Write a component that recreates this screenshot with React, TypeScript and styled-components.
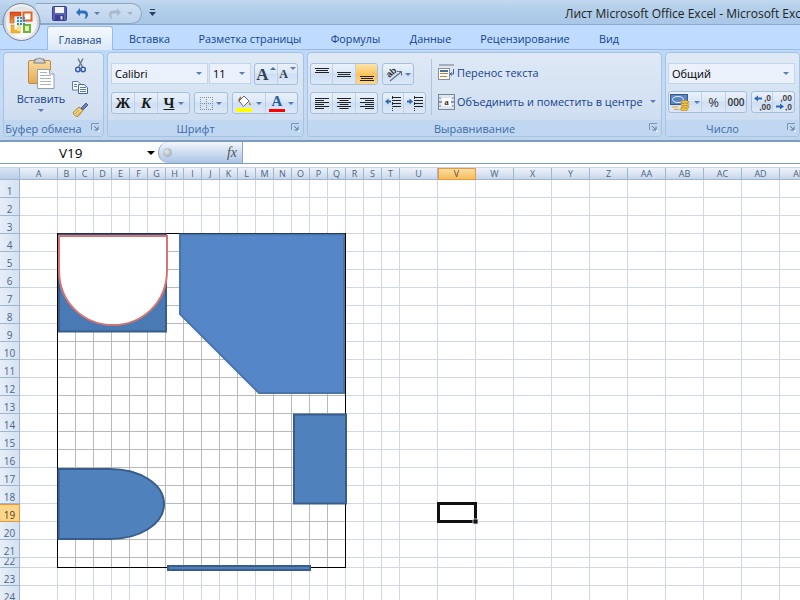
import React from 'react';
import styled, { createGlobalStyle, css } from 'styled-components';

const Global = createGlobalStyle`
  html, body { margin: 0; padding: 0; width: 800px; height: 600px; overflow: hidden; background: #fff; }
  #root { width: 800px; height: 600px; }
`;

const uiFont = `"Open Sans", "Noto Sans", "DejaVu Sans", sans-serif`;

const Window = styled.div`
  width: 800px; height: 600px; overflow: hidden; position: relative;
  display: flex; flex-direction: column; font-family: ${uiFont}; font-size: 11px; color: #15428b;
`;
const TitleBar = styled.div`
  height: 24px; flex: none; display: flex; align-items: center; padding-left: 36px;
  background: linear-gradient(#c2d8f0, #b0cde9 45%, #a9c7e6);
  border-bottom: 1px solid #8ca9c8; box-sizing: content-box; overflow: hidden;
`;
const Qat = styled.div`
  width: 106px; height: 21px; box-sizing: border-box; margin-top: 2px; flex: none;
  display: flex; align-items: center; padding-left: 16px;
  border: 1px solid #8fa7c4; border-left: none; border-radius: 0 12px 12px 0;
  background: linear-gradient(#cfe0f3, #bcd3ec);
`;
const QatGap = styled.span<{ $w: number }>`width: ${p => p.$w}px; flex: none;`;
const Customize = styled.div`margin-left: 7px; display: flex; flex: none;`;
const TitleText = styled.div`
  margin-left: 409px; white-space: pre; color: #222; font-size: 12px; flex: none; margin-top: 3px;
`;
const OfficeOrb = styled.div`position: absolute; left: 2px; top: 2px; width: 42px; height: 42px; z-index: 3;`;

const TabStrip = styled.div`
  height: 25px; flex: none; box-sizing: border-box; display: flex; align-items: flex-end; padding-left: 47px;
  background: #bfdbff; border-bottom: 1px solid #9ebbdd;
`;
const Tab = styled.div<{ $active?: boolean; $w: number }>`
  width: ${p => p.$w}px; height: 23px; flex: none; display: flex; align-items: center; justify-content: center;
  font-size: 10.8px; color: #15428b; box-sizing: border-box; white-space: nowrap; padding-top: 2px;
  ${p => p.$active && css`
    background: linear-gradient(#f5f9fe, #dbe8f7);
    border: 1px solid #9ebbdd; border-bottom: none; border-radius: 3px 3px 0 0; margin-bottom: -1px; height: 24px;
  `}
`;
const Ribbon = styled.div`
  height: 92px; flex: none; box-sizing: border-box; display: flex; gap: 3px; padding: 2px 0 3px 3px;
  background: linear-gradient(#bcd8fb, #c7dcf4 60%, #bed3ec);
  border-bottom: 2px solid #7d9cc0; overflow: hidden;
`;
const Group = styled.section<{ $w: number }>`
  width: ${p => p.$w}px; flex: none; display: flex; flex-direction: column; box-sizing: border-box;
  border: 1px solid #a7c3e2; border-radius: 4px; overflow: hidden;
  background: linear-gradient(#dfe9f6, #d3e1f2 60%, #c9daef);
`;
const GroupBody = styled.div`flex: 1; display: flex; min-height: 0;`;
const GroupLabel = styled.div`
  height: 16px; flex: none; box-sizing: border-box; display: flex; align-items: center; justify-content: center; position: relative;
  background: #c0d7f1; color: #3e6aaa; font-size: 11px; line-height: 16px; white-space: nowrap; padding: 1px 20px 0 0;
`;
const Launcher = styled.span`position: absolute; right: 3px; top: 3px; display: flex;`;

const PasteColumn = styled.div`
  width: 62px; margin-left: 6px; flex: none; display: flex; flex-direction: column; align-items: center; padding-top: 4px;
`;
const PasteLabel = styled.div`margin-top: 2px; color: #15428b; font-size: 11px; line-height: 15px;`;
const CaretSlot = styled.div`height: 9px; display: flex; align-items: center;`;
const ClipTools = styled.div`
  display: flex; flex-direction: column; align-items: center; padding-top: 5px; gap: 8px; width: 20px; margin-left: -2px;
`;
const Stack = styled.div<{ $pad: number }>`
  display: flex; flex-direction: column; gap: 7px; padding: 10px 0 0 ${p => p.$pad}px; flex: none;
`;
const Row = styled.div`display: flex; gap: 4px; align-items: flex-start;`;
const Combo = styled.div<{ $w: number; $mr: number }>`
  width: ${p => p.$w}px; height: 21px; box-sizing: border-box; flex: none; background: #eaf1fb; border: 1px solid #c3d5ec;
  display: flex; align-items: center; justify-content: space-between; padding: 0 5px 0 3px;
  color: #000; font-size: 11px; margin-right: ${p => p.$mr}px;
`;
const ButtonGroup = styled.div`
  display: flex; height: 22px; box-sizing: border-box; flex: none; border: 1px solid #a8bfdc; border-radius: 3px; overflow: hidden;
  background: linear-gradient(#e9f1fb, #dce8f7 45%, #cfdff3 50%, #dbe8f8);
`;
const ToolButton = styled.div<{ $w: number; $active?: boolean }>`
  width: ${p => p.$w}px; flex: none; display: flex; align-items: center; justify-content: center; gap: 3px; box-sizing: border-box;
  border-right: 1px solid #c0d2e9; color: #000;
  &:last-child { border-right: none; }
  ${p => p.$active && css`background: linear-gradient(#fde3a8, #fbc35a 55%, #fdd68a);`}
`;
const Caret = styled.span<{ $color?: string }>`
  display: inline-block; width: 0; height: 0; flex: none;
  border-left: 3px solid transparent; border-right: 3px solid transparent; border-top: 3px solid ${p => p.$color ?? '#5a7fae'};
`;
const UpCaret = styled.span`
  width: 0; height: 0; flex: none; align-self: flex-start; margin-top: 3px; margin-left: -2px;
  border-left: 3px solid transparent; border-right: 3px solid transparent; border-bottom: 3px solid #4a6e9f;
`;
const TopCaret = styled(Caret)`align-self: flex-start; margin-top: 3px; margin-left: -1px;`;
const SerifGlyph = styled.span<{ $italic?: boolean; $under?: boolean; $size?: number; $color?: string }>`
  font-family: "Liberation Serif", serif; font-weight: 700; font-size: ${p => p.$size ?? 15}px; line-height: 1;
  color: ${p => p.$color ?? '#1a1a1a'};
  font-style: ${p => (p.$italic ? 'italic' : 'normal')};
  text-decoration: ${p => (p.$under ? 'underline' : 'none')};
`;
const ColorGlyph = styled.span`display: flex; flex-direction: column; align-items: center; height: 18px;`;
const ColorBar = styled.span`width: 16px; height: 4px; background: #f00; display: block;`;
const Percent = styled.span`color: #333; font-size: 13px;`;
const Thousands = styled.span`color: #333; font-size: 10px; font-weight: 600;`;
const Divider = styled.div`width: 1px; height: 56px; background: #b0c4dd; margin: 6px 6px 0 5px; flex: none;`;
const TextStack = styled.div`display: flex; flex-direction: column; padding-top: 9px; gap: 8px;`;
const TextButton = styled.div`
  height: 21px; display: flex; align-items: center; gap: 2px; color: #15428b; font-size: 10.9px; white-space: nowrap;
`;
const TextCaret = styled(Caret)`margin-left: 5px;`;

const FormulaBar = styled.div`
  height: 21px; flex: none; display: flex; background: #fff; box-sizing: content-box;
  border-bottom: 1px solid #7f9db9;
`;
const NameBox = styled.div`
  width: 158px; flex: none; display: flex; align-items: center; position: relative; color: #000; font-size: 13.5px; padding-left: 59px; box-sizing: border-box;
`;
const NameCaret = styled.span`
  position: absolute; right: 3px; top: 9px; width: 0; height: 0;
  border-left: 4px solid transparent; border-right: 4px solid transparent; border-top: 4px solid #000;
`;
const FxPill = styled.div`
  width: 85px; flex: none; box-sizing: border-box; display: flex; align-items: center; justify-content: space-between; padding: 0 5px 0 4px;
  background: linear-gradient(#f3f7fc, #c6d8ef 60%, #aac4e4);
  border: 1px solid #8ea8c8; border-width: 0 1px 0 1px; border-radius: 10px 0 0 10px;
`;
const Knob = styled.span`
  width: 9px; height: 9px; border-radius: 50%; background: radial-gradient(circle at 40% 40%, #e8e8e8, #8f9aa8);
`;
const Fx = styled.span`font-family: "Liberation Serif", serif; font-style: italic; font-size: 14px; color: #555;`;
const FormulaInput = styled.div`flex: 1; background: #fff;`;
const Strip = styled.div`height: 3px; flex: none; background: #fff; border-bottom: 1px solid #c6d4e6; box-sizing: content-box;`;

const Sheet = styled.div`flex: 1; position: relative; overflow: hidden; background: #fff;`;
const Grid = styled.div<{ $cols: string; $rows: string }>`
  display: grid; grid-template-columns: ${p => p.$cols}; grid-template-rows: ${p => p.$rows};
`;
const headerBase = css`
  box-sizing: border-box; display: flex; justify-content: center; font-size: 9px; color: #4b6584; overflow: hidden; white-space: nowrap;
`;
const Corner = styled.div`
  ${headerBase}; background: linear-gradient(#d8e4f3, #b9cee8); border-right: 1px solid #9eb6ce; border-bottom: 1px solid #9eb6ce;
`;
const ColHead = styled.div<{ $sel?: boolean }>`
  ${headerBase}; align-items: center; line-height: 11px;
  background: linear-gradient(#eef3fa, #dbe5f2 50%, #c8d6e9);
  border-right: 1px solid #9eb6ce; border-bottom: 1px solid #9eb6ce;
  ${p => p.$sel && css`
    background: linear-gradient(#fbe3b2, #f7cb7a 60%, #f4bd60);
    border-color: #f29536; box-shadow: inset 1px 1px 0 #f29536; color: #5d4a20;
  `}
`;
const RowHead = styled.div<{ $sel?: boolean }>`
  ${headerBase}; align-items: flex-end; line-height: 10px; font-size: 10px; padding-bottom: 1px;
  background: linear-gradient(90deg, #e6eef9, #d5e1f1);
  border-right: 1px solid #9eb6ce; border-bottom: 1px solid #9eb6ce;
  ${p => p.$sel && css`background: #fdd68c; border-color: #f29536; box-shadow: inset 0 1px 0 #f29536; color: #4e4426;`}
`;
const Cell = styled.div<{ $dark?: boolean }>`
  box-sizing: border-box; border-right: 1px solid ${p => (p.$dark ? '#b9b9b9' : '#d0d7e5')}; border-bottom: 1px solid ${p => (p.$dark ? '#b9b9b9' : '#d0d7e5')};
`;
const Drawing = styled.svg`position: absolute; left: 0; top: 0; width: 800px; height: 432px; pointer-events: none;`;
const IconSvg = styled.svg`flex: none; display: block;`;

/* ---------- icons ---------- */
const Ic = ({ w, h, children }: { w: number; h: number; children: React.ReactNode }) => (
  <IconSvg width={w} height={h} viewBox={`0 0 ${w} ${h}`}>{children}</IconSvg>
);

const Orb = () => (
  <svg width="42" height="42" viewBox="0 0 42 42">
    <defs>
      <linearGradient id="orbA" x1="0" y1="0" x2="0" y2="1"><stop offset="0" stopColor="#f4f6f8" /><stop offset=".5" stopColor="#c8ced6" /><stop offset="1" stopColor="#eef1f4" /></linearGradient>
      <linearGradient id="orbB" x1="0" y1="0" x2="0" y2="1"><stop offset="0" stopColor="#dfe3e8" /><stop offset=".5" stopColor="#eef0f3" /><stop offset="1" stopColor="#ffffff" /></linearGradient>
      <linearGradient id="orbO" x1="0" y1="0" x2="0" y2="1"><stop offset="0" stopColor="#d9441c" /><stop offset="1" stopColor="#f0a32b" /></linearGradient>
    </defs>
    <circle cx="19.500" cy="20" r="18.500" fill="url(#orbA)" stroke="#76838f" strokeWidth="1" />
    <circle cx="19.500" cy="20" r="15.500" fill="url(#orbB)" />
    <path d="M8 10h11v4h-7v7H8z" fill="url(#orbO)" stroke="#c9481b" strokeWidth=".6" />
    <rect x="21.500" y="10.500" width="8" height="8" fill="#fff" stroke="#e0651f" strokeWidth="2" />
    <path d="M9 23h3v5h6v3H9z" fill="#f3b72c" stroke="#dc9a1c" strokeWidth=".6" />
    <path d="M15 22h4v7h-4z" fill="#fbe08a" />
    <path d="M21 22h8v9h-8z" fill="#72b234" />
    <path d="M23 24h4v5h-4z" fill="#dff2bc" />
    <g fill="#2f8ed0">
      {[15, 18, 21].flatMap(y => [15, 18, 21].map(x => <rect key={`${x}-${y}`} x={x} y={y} width="2" height="2" />))}
    </g>
  </svg>
);
const SaveIc = () => (
  <Ic w={15} h={15}>
    <rect x=".5" y=".5" width="14" height="14" rx="1" fill="#5b61b5" stroke="#3b3f8e" />
    <rect x="3" y="1" width="9" height="6" fill="#f2f4fa" /><rect x="3" y="9" width="9" height="5.5" fill="#3b3f8e" /><rect x="8.5" y="10" width="2" height="3.5" fill="#d6daf0" />
  </Ic>
);
const ArrowIc = ({ color, flip }: { color: string; flip?: boolean }) => (
  <Ic w={14} h={14}>
    <g transform={flip ? 'translate(14,0) scale(-1,1)' : undefined}>
      <path d="M1 6.5 5 2v2.6h3.5c3.2 0 4.5 2 4.5 4.2 0 1.7-1 3.2-2.6 4.2l-.8-1c.8-.7 1-1.700 1-2.500 0-1.200-.7-2-2.200-2H5V10z" fill={color} />
    </g>
  </Ic>
);
const Lines = ({ rows, color = '#222' }: { rows: [number, number, number][]; color?: string }) => (
  <>{rows.map(([x, y, w], i) => <rect key={i} x={x} y={y} width={w} height="1" fill={color} />)}</>
);
const PasteIc = () => (
  <Ic w={27} h={32}>
    <defs><linearGradient id="clipB" x1="0" y1="0" x2="0" y2="1"><stop offset="0" stopColor="#f9dca0" /><stop offset="1" stopColor="#e9a94f" /></linearGradient></defs>
    <rect x=".5" y="3.5" width="22" height="23" rx="1.5" fill="url(#clipB)" stroke="#b98a4a" />
    <path d="M7 4V2h2.5a2.5 2 0 0 1 4 0H16v2l1.5 2h-12z" fill="#d0d4d8" stroke="#7c7f84" />
    <path d="M9.5 12.5h12l4.500 4.500V31.500H9.500z" fill="#fff" stroke="#93a0ad" />
    <path d="M21.500 12.500v4.500H26" fill="#e5e8ee" stroke="#93a0ad" />
    <Lines color="#a9b2bd" rows={[[12, 15, 7], [12, 18, 11], [12, 21, 11], [12, 24, 11], [12, 27, 11]]} />
  </Ic>
);
const ScissorsIc = () => (
  <Ic w={11} h={15}>
    <path d="M3 .5l4.500 8.500M8 .5 3.500 9" stroke="#6d7a87" strokeWidth="1.500" fill="none" />
    <circle cx="2.800" cy="11.500" r="2.200" fill="none" stroke="#3b5ea8" strokeWidth="1.600" />
    <circle cx="8.200" cy="11.500" r="2.200" fill="none" stroke="#3b5ea8" strokeWidth="1.600" />
  </Ic>
);
const CopyIc = () => (
  <Ic w={16} h={13}>
    <path d="M.500.500H6L8.500 3V9H.500z" fill="#fff" stroke="#5a7ba6" />
    <path d="M6.500 3.500H12l3.500 3V12.500H6.500z" fill="#fff" stroke="#3b67a8" />
    <Lines color="#5a7ba6" rows={[[2, 3, 3], [2, 5, 3], [8, 6, 6], [8, 8, 6], [8, 10, 6]]} />
  </Ic>
);
const BrushIc = () => (
  <Ic w={17} h={15}>
    <path d="M1 10.500 7 5l4 3.500-5 6c-2 .5-4-1-5-4z" fill="#efd17d" stroke="#a98a3a" />
    <path d="M3 12l4-4M5 13.500l4-4" stroke="#b7913a" strokeWidth=".7" />
    <path d="M9 6 14 1l2 2-5 5z" fill="#6d7fae" stroke="#3c4c80" strokeWidth=".8" />
  </Ic>
);
const LauncherIc = () => (
  <Ic w={9} h={9}>
    <path d="M.500 7V.500H8" fill="none" stroke="#7d94b3" />
    <path d="M3 3l3.500 3.500M7 3.500V7H3.500" fill="none" stroke="#5c7699" />
    <rect x="7.500" y="7.500" width="1.500" height="1.500" fill="#fff" />
  </Ic>
);
const BorderIc = () => (
  <Ic w={13} h={13}>
    <g fill="#8a8f96">
      {[0, 2, 4, 6, 8, 10, 12].flatMap(i => [
        <rect key={`a${i}`} x={i} y="0" width="1" height="1" />, <rect key={`b${i}`} x={i} y="6" width="1" height="1" />, <rect key={`c${i}`} x={i} y="12" width="1" height="1" />,
        <rect key={`d${i}`} x="0" y={i} width="1" height="1" />, <rect key={`e${i}`} x="6" y={i} width="1" height="1" />, <rect key={`f${i}`} x="12" y={i} width="1" height="1" />,
      ])}
    </g>
  </Ic>
);
const FillIc = () => (
  <Ic w={17} h={18}>
    <path d="M3 7 8 2l5 5-5.500 5.500z" fill="#fff" stroke="#667" />
    <path d="M3 7.500c0-1 0-3 2-4.500" fill="none" stroke="#8b5a1f" strokeWidth="1.200" />
    <path d="M13 7l2 3.500c0 1-2 1-2 0z" fill="#c8872a" />
    <rect x="0" y="14" width="16" height="4" fill="#ffff00" />
  </Ic>
);
const AlignV = ({ y }: { y: number }) => (
  <Ic w={14} h={14}>
    <Lines rows={[[0, y, 14], [1, y + 2, 12], [0, y + 4, 14]]} />
  </Ic>
);
const AlignH = ({ mode }: { mode: 'l' | 'c' | 'r' }) => {
  const x = (w: number) => (mode === 'l' ? 0 : mode === 'c' ? (14 - w) / 2 : 14 - w);
  return (
    <Ic w={14} h={11}>
      <Lines rows={[[x(14), 0, 14], [x(9), 2, 9], [x(14), 4, 14], [x(9), 6, 9], [x(14), 8, 14], [x(9), 10, 9]]} />
    </Ic>
  );
};
const OrientIc = () => (
  <Ic w={16} h={15}>
    <text x="1" y="9" fontSize="9" fontWeight="700" fontFamily="Liberation Sans" fill="#333" transform="rotate(-40 5 7)">ab</text>
    <path d="M4 14 15 5M11 4.500H15.500V8.500" fill="none" stroke="#5f6e80" strokeWidth="1.100" />
  </Ic>
);
const IndentIc = ({ right }: { right?: boolean }) => (
  <Ic w={16} h={15}>
    <Lines rows={[[7, 1, 9], [7, 4, 9], [7, 7, 9], [7, 10, 9]]} />
    <path d="M7.500 0v15" stroke="#333" strokeDasharray="1 1" />
    <path d={right ? 'M6 5.500 2.500 2.500v2H0v2h2.500v2z' : 'M0 5.500 3.500 2.500v2H6v2H3.500v2z'} fill="#2d68b8" />
  </Ic>
);
const WrapIc = () => (
  <Ic w={17} h={17}>
    <path d="M1 1h15" stroke="#777" />
    <rect x=".500" y="4.500" width="11" height="11" fill="#fff" stroke="#8a8f96" />
    <rect x="2" y="6" width="8" height="2" fill="#4a6e9f" />
    <rect x="2" y="9" width="8" height="1" fill="#c88428" /><rect x="2" y="12" width="7" height="1" fill="#c88428" />
    <path d="M15.500 5v5H12.500M14 8.500l-2 1.500 2 1.500" fill="none" stroke="#345e96" />
  </Ic>
);
const MergeIc = () => (
  <Ic w={17} h={16}>
    <rect x=".500" y=".500" width="16" height="15" fill="#dde6f2" stroke="#7d8792" />
    <rect x="4" y="4" width="9" height="8" fill="#fff" />
    <text x="8.500" y="11" fontSize="9" fontWeight="700" textAnchor="middle" fontFamily="Liberation Serif" fill="#333">a</text>
    <path d="M1 8h3M13 8h3" stroke="#2d4e80" />
    <path d="M1 4h2M1 12h2M14 4h2M14 12h2" stroke="#7d8792" />
  </Ic>
);
const CurrencyIc = () => (
  <Ic w={21} h={17}>
    <rect x=".500" y=".500" width="17" height="10" fill="#5b86c4" stroke="#35598f" />
    <ellipse cx="8" cy="5.500" rx="5.500" ry="3" fill="none" stroke="#e6eef8" />
    <path d="M2 13h6M4 15.500h5" stroke="#e9a52f" strokeWidth="1.200" />
    <ellipse cx="15" cy="8" rx="4" ry="1.500" fill="#f3c64a" stroke="#a87b1c" strokeWidth=".6" />
    <ellipse cx="15" cy="10.500" rx="4" ry="1.500" fill="#f3c64a" stroke="#a87b1c" strokeWidth=".6" />
    <ellipse cx="15" cy="13" rx="4" ry="1.500" fill="#f3c64a" stroke="#a87b1c" strokeWidth=".6" />
    <ellipse cx="14" cy="15.300" rx="4" ry="1.500" fill="#f3c64a" stroke="#a87b1c" strokeWidth=".6" />
  </Ic>
);
const DecimalIc = ({ more }: { more?: boolean }) => (
  <Ic w={19} h={17}>
    {more ? (
      <>
        <text x="18" y="7" textAnchor="end" fontSize="8.500" fontWeight="700" fontFamily="Liberation Sans" fill="#444">,0</text>
        <text x="18" y="15.500" textAnchor="end" fontSize="8.500" fontWeight="700" fontFamily="Liberation Sans" fill="#444">,00</text>
        <path d="M1 4.500 5 1.500v2h4v2H5v2z" fill="#2d68b8" />
      </>
    ) : (
      <>
        <text x="18" y="7" textAnchor="end" fontSize="8.500" fontWeight="700" fontFamily="Liberation Sans" fill="#444">,00</text>
        <text x="18" y="15.500" textAnchor="end" fontSize="8.500" fontWeight="700" fontFamily="Liberation Sans" fill="#444">,0</text>
        <path d="M10 12.500 6 9.500v2H2v2h4v2z" fill="#2d68b8" />
      </>
    )}
  </Ic>
);

/* ---------- sheet data ---------- */
const letters = ['A','B','C','D','E','F','G','H','I','J','K','L','M','N','O','P','Q','R','S','T','U','V','W','X','Y','Z','AA','AB','AC','AD','AE'];
const colWidth = (i: number) => (i === 0 || i >= 20 ? 38 : 18);
const rowCount = 24;
const rowHeight = (r: number) => (r === 22 ? 10 : 18);
const colsTemplate = `20px ${letters.map((_, i) => `${colWidth(i)}px`).join(' ')}`;
const rowsTemplate = `12px ${Array.from({ length: rowCount }, (_, i) => `${rowHeight(i + 1)}px`).join(' ')}`;

const tabs: [string, number][] = [['Главная', 66], ['Вставка', 73], ['Разметка страницы', 128], ['Формулы', 83], ['Данные', 67], ['Рецензирование', 122], ['Вид', 46]];

export default function App() {
  return (
    <Window>
      <Global />
      <OfficeOrb><Orb /></OfficeOrb>
      <TitleBar>
        <Qat>
          <SaveIc />
          <QatGap $w={8} />
          <ArrowIc color="#2f6fc0" />
          <QatGap $w={5} />
          <Caret />
          <QatGap $w={8} />
          <ArrowIc color="#a9b9c9" flip />
          <QatGap $w={5} />
          <Caret $color="#a5b5c7" />
        </Qat>
        <Customize>
          <Ic w={7} h={9}><rect x="1" y="1" width="5" height="1" fill="#2b3f66" /><path d="M0 4h7L3.500 8z" fill="#2b3f66" /></Ic>
        </Customize>
        <TitleText>Лист Microsoft Office Excel - Microsoft Excel</TitleText>
      </TitleBar>
      <TabStrip>
        {tabs.map(([t, w], i) => <Tab key={t} $w={w} $active={i === 0}>{t}</Tab>)}
      </TabStrip>
      <Ribbon>
        <Group $w={101}>
          <GroupBody>
            <PasteColumn>
              <PasteIc />
              <PasteLabel>Вставить</PasteLabel>
              <CaretSlot><Caret /></CaretSlot>
            </PasteColumn>
            <ClipTools>
              <ScissorsIc />
              <CopyIc />
              <BrushIc />
            </ClipTools>
          </GroupBody>
          <GroupLabel>Буфер обмена<Launcher><LauncherIc /></Launcher></GroupLabel>
        </Group>
        <Group $w={197}>
          <GroupBody>
            <Stack $pad={3}>
              <Row>
                <Combo $w={97} $mr={-3}>Calibri<Caret /></Combo>
                <Combo $w={42} $mr={-1}>11<Caret /></Combo>
                <ButtonGroup>
                  <ToolButton $w={23}><SerifGlyph $size={17} $color="#33414f">A</SerifGlyph><UpCaret /></ToolButton>
                  <ToolButton $w={19}><SerifGlyph $size={12} $color="#33414f">A</SerifGlyph><TopCaret /></ToolButton>
                </ButtonGroup>
              </Row>
              <Row>
                <ButtonGroup>
                  <ToolButton $w={23}><SerifGlyph>Ж</SerifGlyph></ToolButton>
                  <ToolButton $w={23}><SerifGlyph $italic>К</SerifGlyph></ToolButton>
                  <ToolButton $w={31}><SerifGlyph $under>Ч</SerifGlyph><Caret /></ToolButton>
                </ButtonGroup>
                <ButtonGroup>
                  <ToolButton $w={32}><BorderIc /><Caret /></ToolButton>
                </ButtonGroup>
                <ButtonGroup>
                  <ToolButton $w={33}><FillIc /><Caret /></ToolButton>
                  <ToolButton $w={31}>
                    <ColorGlyph>
                      <SerifGlyph $size={15} $color="#2a5aa0">A</SerifGlyph>
                      <ColorBar />
                    </ColorGlyph>
                    <Caret />
                  </ToolButton>
                </ButtonGroup>
              </Row>
            </Stack>
          </GroupBody>
          <GroupLabel>Шрифт<Launcher><LauncherIc /></Launcher></GroupLabel>
        </Group>
        <Group $w={355}>
          <GroupBody>
            <Stack $pad={2}>
              <Row>
                <ButtonGroup>
                  <ToolButton $w={22}><AlignV y={1} /></ToolButton>
                  <ToolButton $w={23}><AlignV y={5} /></ToolButton>
                  <ToolButton $w={21} $active><AlignV y={9} /></ToolButton>
                </ButtonGroup>
                <ButtonGroup>
                  <ToolButton $w={30}><OrientIc /><Caret /></ToolButton>
                </ButtonGroup>
              </Row>
              <Row>
                <ButtonGroup>
                  <ToolButton $w={22}><AlignH mode="l" /></ToolButton>
                  <ToolButton $w={23}><AlignH mode="c" /></ToolButton>
                  <ToolButton $w={21}><AlignH mode="r" /></ToolButton>
                </ButtonGroup>
                <ButtonGroup>
                  <ToolButton $w={21}><IndentIc /></ToolButton>
                  <ToolButton $w={21}><IndentIc right /></ToolButton>
                </ButtonGroup>
              </Row>
            </Stack>
            <Divider />
            <TextStack>
              <TextButton><WrapIc />Перенос текста</TextButton>
              <TextButton><MergeIc />Объединить и поместить в центре<TextCaret /></TextButton>
            </TextStack>
          </GroupBody>
          <GroupLabel>Выравнивание<Launcher><LauncherIc /></Launcher></GroupLabel>
        </Group>
        <Group $w={135}>
          <GroupBody>
            <Stack $pad={2}>
              <Row>
                <Combo $w={127} $mr={0}>Общий<Caret /></Combo>
              </Row>
              <Row>
                <ButtonGroup>
                  <ToolButton $w={33}><CurrencyIc /><Caret /></ToolButton>
                  <ToolButton $w={24}><Percent>%</Percent></ToolButton>
                  <ToolButton $w={20}><Thousands>000</Thousands></ToolButton>
                </ButtonGroup>
                <ButtonGroup>
                  <ToolButton $w={21}><DecimalIc more /></ToolButton>
                  <ToolButton $w={21}><DecimalIc /></ToolButton>
                </ButtonGroup>
              </Row>
            </Stack>
          </GroupBody>
          <GroupLabel>Число<Launcher><LauncherIc /></Launcher></GroupLabel>
        </Group>
      </Ribbon>
      <FormulaBar>
        <NameBox>V19<NameCaret /></NameBox>
        <FxPill><Knob /><Fx>fx</Fx></FxPill>
        <FormulaInput />
      </FormulaBar>
      <Strip />
      <Sheet>
        <Grid $cols={colsTemplate} $rows={rowsTemplate}>
          <Corner />
          {letters.map(l => <ColHead key={l} $sel={l === 'V'}>{l}</ColHead>)}
          {Array.from({ length: rowCount }, (_, r) => (
            <React.Fragment key={r}>
              <RowHead $sel={r + 1 === 19}>{r + 1}</RowHead>
              {letters.map((l, c) => (
                <Cell key={l} $dark={c >= 1 && c <= 16 && r + 1 >= 4 && r + 1 <= 22} />
              ))}
            </React.Fragment>
          ))}
        </Grid>
        <Drawing viewBox="0 168 800 432">
          <rect x="57.500" y="233.500" width="288" height="334" fill="none" stroke="#000" strokeWidth="1" />
          <rect x="59" y="234.500" width="107" height="97" fill="#4a7ab4" stroke="#385d8a" strokeWidth="2" />
          <path d="M59 236 H167 V270 C167 305 140 325 113 325 C86 325 59 305 59 270 Z" fill="#fff" stroke="#d8736f" strokeWidth="2" />
          <path d="M180 234.500 H344 V393 H259 L180 314 Z" fill="#5587c8" stroke="#4a75ab" strokeWidth="2" />
          <rect x="294" y="414.500" width="52" height="89" fill="#4f81bd" stroke="#385d8a" strokeWidth="2" />
          <path d="M58.500 469 H110 C140 469 164 484 164 504 C164 524 140 539 110 539 H58.500 Z" fill="#4f81bd" stroke="#385d8a" strokeWidth="2" />
          <rect x="168" y="566" width="142" height="4" fill="#4f81bd" stroke="#385d8a" strokeWidth="2" />
          <rect x="438.500" y="503.500" width="37" height="18" fill="none" stroke="#111" strokeWidth="3" />
          <rect x="473" y="519" width="5" height="5" fill="#111" stroke="#e8eef6" strokeWidth=".8" />
        </Drawing>
      </Sheet>
    </Window>
  );
}
